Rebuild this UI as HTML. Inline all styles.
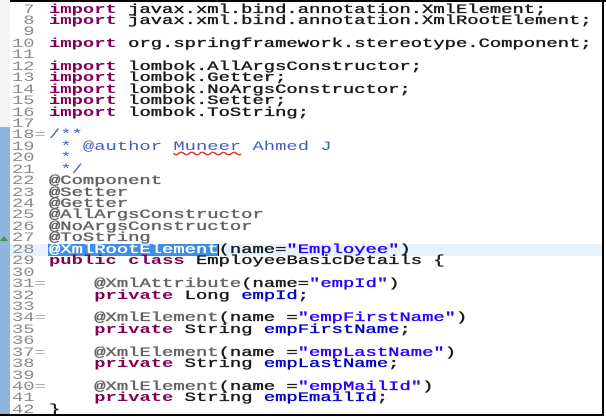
<!DOCTYPE html>
<html><head><meta charset="utf-8"><style>
html,body{margin:0;padding:0;background:#fff;width:606px;height:418px;overflow:hidden;position:relative}
.top{position:absolute;left:10px;top:0;width:596px;height:2px;background:#000}
.right{position:absolute;left:602px;top:0;width:2px;height:416px;background:#000}
.bot{position:absolute;left:0;top:414px;width:604px;height:2px;background:#000}
.bar{position:absolute;left:0;top:127px;width:10px;height:287px;background:#8fb5de}
.bar2{position:absolute;left:0;top:0;width:10px;height:127px;background:#f4f4f4}
.cur{position:absolute;left:10px;top:244px;width:592px;height:12px;background:#e8f2fe}
.sel{position:absolute;left:48px;top:244px;width:170px;height:12px;background:#3d8ee6}
.caret{position:absolute;left:218px;top:244px;width:1px;height:12px;background:#000}
.tri{position:absolute;left:0;top:236px;width:0;height:0;border-left:4px solid transparent;border-right:4px solid transparent;border-bottom:5px solid #3c9a3c}
pre{margin:0;position:absolute;top:4.6px;font-family:"Liberation Mono",monospace;font-size:12.5px;line-height:11.43px;font-weight:normal;transform-origin:0 0;transform:scaleX(1.507);color:#1a1a1a;-webkit-text-stroke:0.35px currentColor}
.nums{left:12px;color:#8a8a8a;-webkit-text-stroke:0}
.code{left:49px}
.k{color:#7f0055;font-weight:bold;-webkit-text-stroke:0}.a{color:#646464}.s{color:#2a00ff}.f{color:#0000c0}.c{color:#3f5fbf;-webkit-text-stroke:0}.w{color:#fff}
.u{text-decoration:underline wavy #e03030}
.fm{color:#aab}
</style></head><body>
<div class="bar2"></div><div class="bar"></div>
<div class="cur"></div><div class="sel"></div><div class="caret"></div>
<div class="tri"></div>
<pre class="nums"> 7
 8
 9
10
11
12
13
14
15
16
17
18<span class="fm">=</span>
19
20
21
22
23
24
25
26
27
28
29
30
31<span class="fm">=</span>
32
33
34<span class="fm">=</span>
35
36
37<span class="fm">=</span>
38
39
40<span class="fm">=</span>
41
42</pre>
<pre class="code"><span class="k">import</span> javax.xml.bind.annotation.XmlElement;
<span class="k">import</span> javax.xml.bind.annotation.XmlRootElement;

<span class="k">import</span> org.springframework.stereotype.Component;

<span class="k">import</span> lombok.AllArgsConstructor;
<span class="k">import</span> lombok.Getter;
<span class="k">import</span> lombok.NoArgsConstructor;
<span class="k">import</span> lombok.Setter;
<span class="k">import</span> lombok.ToString;

<span class="c">/**</span>
<span class="c"> * @author <span class="u">Muneer</span> Ahmed J</span>
<span class="c"> *</span>
<span class="c"> */</span>
<span class="a">@Component</span>
<span class="a">@Setter</span>
<span class="a">@Getter</span>
<span class="a">@AllArgsConstructor</span>
<span class="a">@NoArgsConstructor</span>
<span class="a">@ToString</span>
<span class="w">@XmlRootElement</span>(name=<span class="s">"Employee"</span>)
<span class="k">public</span> <span class="k">class</span> EmployeeBasicDetails {

    <span class="a">@XmlAttribute</span>(name=<span class="s">"empId"</span>)
    <span class="k">private</span> Long <span class="f">empId</span>;

    <span class="a">@XmlElement</span>(name =<span class="s">"empFirstName"</span>)
    <span class="k">private</span> String <span class="f">empFirstName</span>;

    <span class="a">@XmlElement</span>(name =<span class="s">"empLastName"</span>)
    <span class="k">private</span> String <span class="f">empLastName</span>;

    <span class="a">@XmlElement</span>(name =<span class="s">"empMailId"</span>)
    <span class="k">private</span> String <span class="f">empEmailId</span>;
}</pre>
<div class="top"></div><div class="right"></div><div class="bot"></div>
</body></html>
